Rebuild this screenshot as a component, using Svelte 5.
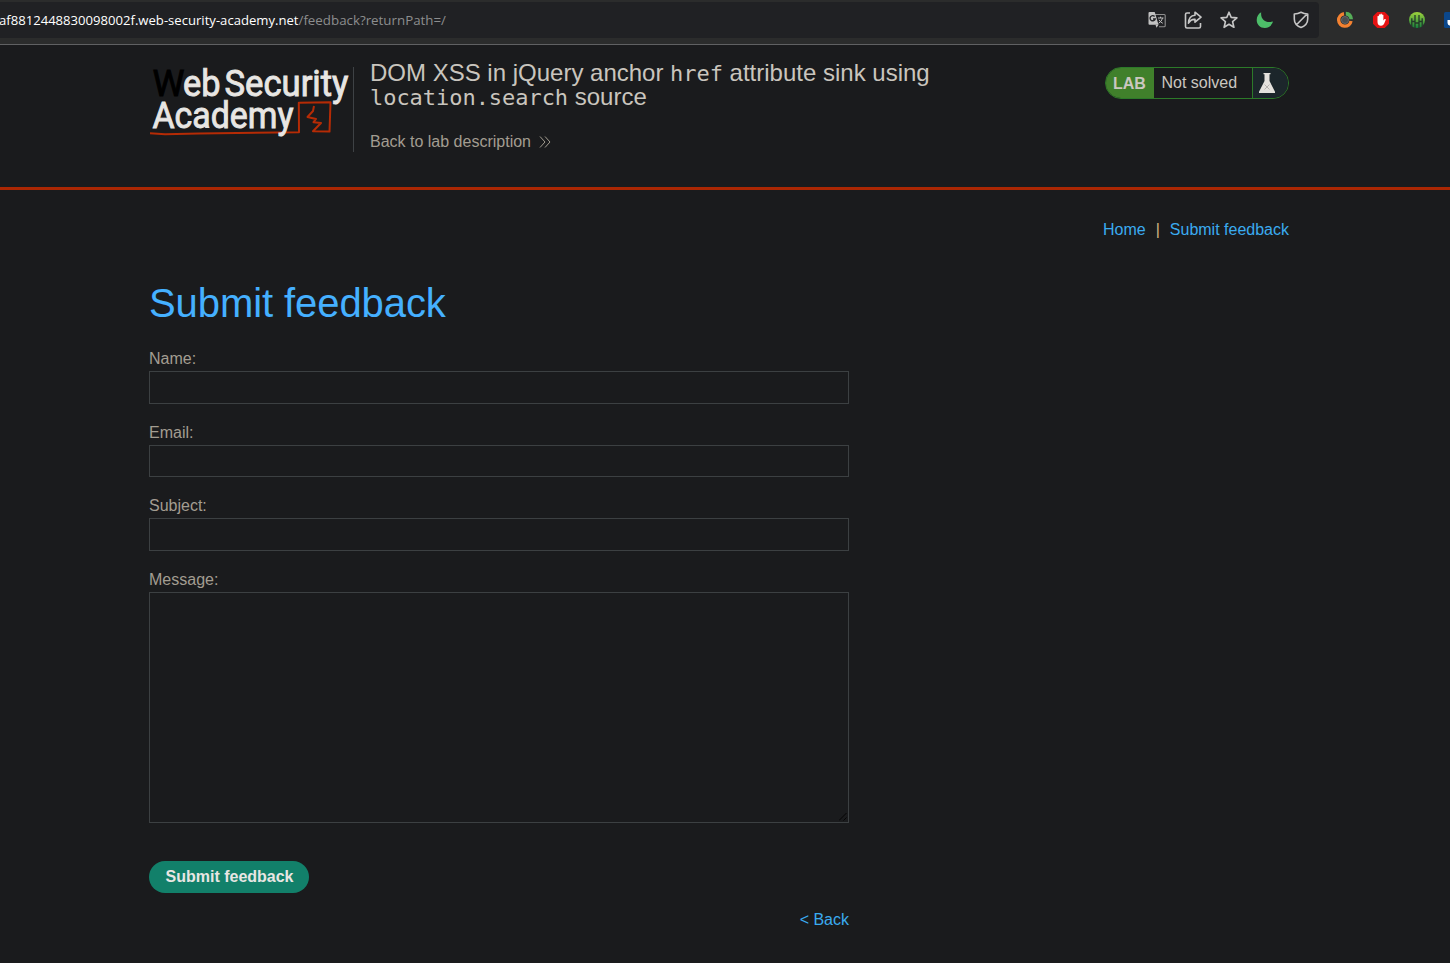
<script>
  const fields = [
    { id: 'name', label: 'Name:', height: 33, gap: 17 },
    { id: 'email', label: 'Email:', height: 32, gap: 17 },
    { id: 'subject', label: 'Subject:', height: 33, gap: 17 }
  ];
</script>

<div class="toolbar">
  <div class="address">
    <svg class="url" width="460" height="36">
      <text x="-1" y="23" class="host" textLength="299.5" lengthAdjust="spacingAndGlyphs">af8812448830098002f.web-security-academy.net</text>
      <text x="298.5" y="23" class="path" textLength="147.5" lengthAdjust="spacingAndGlyphs">/feedback?returnPath=/</text>
    </svg>
    <div class="actions">
      <svg width="18" height="18" viewBox="0 0 18 18">
        <path d="M7 3.5h9.2q1 0 1 1v10.2q0 1-1 1H11" fill="none" stroke="#8f8f8f" stroke-width="1.1" />
        <path d="M1.5 1h5.2l3.8 12.8H1.5q-1 0-1-1V2q0-1 1-1z" fill="#c2c2c2" />
        <path d="M10.5 13.8l-2 3-1-3z" fill="#c2c2c2" />
        <path d="M6.6 5.4A2.6 2.6 0 1 0 7.2 8H5" fill="none" stroke="#242528" stroke-width="1.4" />
        <path d="M10 7h5.5M12.5 5.7V7M14.6 7q-.8 3.5-4 5.3M11 8.8q1.4 2.4 3.8 3.5" fill="none" stroke="#bbb" stroke-width="1" />
      </svg>
      <svg width="18" height="18" viewBox="0 0 18 18" fill="none" stroke="#c6c6c6" stroke-width="1.6" stroke-linejoin="round">
        <path d="M6 2H3Q1.5 2 1.5 3.5v12Q1.5 17 3 17h12q1.5 0 1.5-1.5V12" />
        <path d="M11 1.2l6 5-6 5V8.4Q7 8 4.5 12.2 4.7 4.7 11 4.2z" />
      </svg>
      <svg width="18" height="18" viewBox="0 0 18 18" fill="none" stroke="#c6c6c6" stroke-width="1.6" stroke-linejoin="round">
        <path d="M9 1.2l2.2 5.2 5.7.5-4.3 3.8 1.3 5.6L9 13.3l-4.9 3 1.3-5.6L1.1 6.9l5.7-.5z" />
      </svg>
      <svg width="18" height="18" viewBox="0 0 18 18">
        <path d="M5.2 1.2C4.3 8 9.5 12.7 17 10.6 16 14.2 12.7 17 8.8 17 4.2 17 .7 13.5.7 9 .7 5.6 2.4 2.6 5.2 1.2z" fill="#4dbd69" />
      </svg>
      <svg width="18" height="18" viewBox="0 0 18 18" fill="none" stroke="#c6c6c6" stroke-width="1.6" stroke-linejoin="round">
        <path d="M9 1.3Q12 3 15.7 3V8q0 6-6.7 8.5Q2.3 14 2.3 8V3Q6 3 9 1.3zM4.5 13.8L14.8 3.3" />
      </svg>
    </div>
  </div>
  <div class="extensions">
    <svg width="18" height="18" viewBox="0 0 18 18">
      <path d="M8 2.8A6.2 6.2 0 1 0 15 10" fill="none" stroke="#f38231" stroke-width="3.4" />
      <path d="M9.8.8Q16.5 1.2 17 8.3h-3.6Q13 4.9 9.8 4.5z" fill="#55ad58" />
      <circle cx="9" cy="9" r="3.5" fill="#4a4d4f" stroke="#64686b" />
    </svg>
    <svg width="18" height="18" viewBox="0 0 18 18">
      <path d="M5.3 1h7.4L17 5.3v7.4L12.7 17H5.3L1 12.7V5.3z" fill="#e51212" />
      <path d="M5.5 9.5V5.2q.7-.9 1.4 0V3.7q.7-.9 1.5 0V3q.7-.8 1.5 0v1q.8-.8 1.5 0v5.4l1.2-1.3q1-.5 1.3.3L12 13Q11 14.9 9 14.8 5.500 14.400 5.500 11z" fill="#fff" />
    </svg>
    <svg width="18" height="18" viewBox="0 0 18 18">
      <defs>
        <linearGradient id="leaf" x2="0" y2="1"><stop stop-color="#9fd33c" /><stop offset="1" stop-color="#16803d" /></linearGradient>
      </defs>
      <circle cx="9" cy="9" r="8" fill="url(#leaf)" />
      <path d="M3.8 7.3v8M7 4v13M11 4v13M14.2 7.3v8M3.8 10.5H7M11 10.5h3.2M7 12h4" stroke="#24382a" stroke-width="1.3" fill="none" />
    </svg>
    <svg width="18" height="18" viewBox="0 0 18 18">
      <rect y="1" width="18" height="16" rx="1.5" fill="#0b478b" />
      <path d="M3.5 9h9v3q0 3-4.5 3t-4.5-3z" fill="#fff" />
    </svg>
  </div>
</div>

<header>
  <div class="container head">
    <svg class="logo" width="204" height="85" viewBox="149 67 204 85">
      <g class="brand">
        <text x="152.5" y="95.7" class="dark" textLength="32" lengthAdjust="spacingAndGlyphs">W</text>
        <text x="183" y="95.7" textLength="37.5" lengthAdjust="spacingAndGlyphs">eb</text>
        <text x="224.5" y="95.7" textLength="124" lengthAdjust="spacingAndGlyphs">Security</text>
      </g>
      <g fill="none" stroke="#b52b05" stroke-width="2" stroke-linejoin="round">
        <path d="M150 133.2L165 134.2 199 133.6L299 132.2 298.8 102.700 330.500 102.200 329.500 131.600 313 131.300 321 123 313.500 122.200 316 119 307.500 117 313 111 314 106" />
      </g>
      <g class="brand">
        <text x="152.5" y="128.3" textLength="141" lengthAdjust="spacingAndGlyphs">Academy</text>
      </g>
    </svg>
    <div class="title">
      <h2>DOM XSS in jQuery anchor <code>href</code> attribute sink using <code>location.search</code> source</h2>
      <a class="lab-link" href="#lab">Back to lab description
        <svg width="12" height="12" viewBox="0 0 12 12"><path d="M1 .5L6 6 1 11.5M6 .5L11 6 6 11.5" fill="none" stroke="#a39d91" /></svg>
      </a>
    </div>
    <div class="status">
      <b>LAB</b>
      <span>Not solved</span>
      <i>
        <svg width="16" height="20" viewBox="0 0 16 20">
          <path d="M4.5 0h7v1.2h-1V8L16 18.7v1.3H0v-1.3L5.5 8V1.2h-1z" fill="#e4e2dd" />
          <path d="M5.500 11.500l5 5M10.500 11.500l-5 5" stroke="#b5b3af" fill="none" />
        </svg>
      </i>
    </div>
  </div>
</header>

<main class="container">
  <nav><a href="#home">Home</a><span>|</span><a href="#feedback">Submit feedback</a></nav>
  <h1>Submit feedback</h1>
  <form>
    {#each fields as f}
      <label for={f.id}>{f.label}</label>
      <input id={f.id} style="height: {f.height}px; margin-bottom: {f.gap}px" />
    {/each}
    <label for="message">Message:</label>
    <div class="area">
      <textarea id="message"></textarea>
      <svg class="grip" width="8" height="8"><path d="M0 7.5L7.5 0M4.5 7.5L7.5 4.5" stroke="#050505" /></svg>
    </div>
    <button type="button">Submit feedback</button>
    <a class="back" href="#back">&lt; Back</a>
  </form>
</main>

<style>
  :global(body) {
    background: #1a1b1d;
    font-family: "Liberation Sans", Arial, sans-serif;
    font-size: 16px;
    overflow: hidden;
  }
  * { box-sizing: border-box; }
  svg { display: block; flex: none; }
  a { color: #3aabf0; text-decoration: none; }
  .toolbar {
    height: 45px;
    display: flex;
    padding-top: 2px;
    background: #2b2c2c;
    border-bottom: 1px solid #606163;
    overflow: hidden;
  }
  .address {
    width: 1319px;
    height: 36px;
    flex: none;
    display: flex;
    justify-content: space-between;
    align-items: center;
    background: #202124;
    border-radius: 0 4px 4px 0;
  }
  .url { font: 13px "Open Sans", "Noto Sans", sans-serif; }
  .host { fill: #fff; }
  .path { fill: #8c8d8e; }
  .actions { display: flex; gap: 18px; padding-right: 9px; }
  .extensions { display: flex; gap: 18px; padding: 9px 0 0 17px; }
  .container { width: 1140px; margin: 0 0 0 149px; }
  header { height: 145px; border-bottom: 3px solid #ab2703; padding-top: 22px; }
  .head { display: flex; align-items: flex-start; }
  .logo { overflow: visible; }
  .brand { font: 400 37px Roboto, sans-serif; fill: #e8e6e3; stroke: #e8e6e3; stroke-width: 0.9px; }
  .dark { fill: #000; stroke: #000; }
  .title { width: 600px; height: 85px; border-left: 1px solid #3e4245; padding-left: 16px; margin-right: auto; }
  h2 { margin: -6px 0 0; font-size: 24px; line-height: 24px; font-weight: 400; color: #c9c5be; }
  code { font: 22px/20px "DejaVu Sans Mono", monospace; letter-spacing: -0.04px; }
  .lab-link { display: flex; align-items: center; gap: 8px; line-height: 18px; margin-top: 24px; color: #a39d91; }
  .lab-link svg { margin-top: -1px; }
  .status {
    width: 184px;
    height: 32px;
    display: flex;
    border: 1px solid #2c7a29;
    border-radius: 16px;
    overflow: hidden;
    color: #cbc7c0;
    line-height: 30px;
  }
  .status b { width: 48px; padding-left: 7px; background: #40802b; line-height: 31px; }
  .status span { width: 98px; padding-left: 7.5px; }
  .status i { flex: 1; border-left: 1px solid #2c7a29; background: #1c262b; padding: 5px 0 0 6px; }
  nav { display: flex; justify-content: flex-end; gap: 10px; line-height: 18px; padding-top: 31px; color: #d0b384; }
  h1 { margin: 41px 0 0; font-size: 40px; line-height: 46px; font-weight: 400; color: #45b0ff; letter-spacing: -0.08px; }
  form { width: 700px; display: flex; flex-direction: column; margin-top: 21px; }
  label { height: 24px; line-height: 24px; color: #a39d91; }
  input, textarea {
    display: block;
    width: 100%;
    background: #1a1b1d;
    border: 1px solid #3c4042;
    border-radius: 0;
    padding: 4px;
    margin: 0;
    color: #ddd;
    outline: none;
  }
  textarea { height: 231px; resize: none; }
  .area { position: relative; }
  .grip { position: absolute; right: 2px; bottom: 2px; }
  button {
    width: 160px;
    height: 32px;
    margin-top: 38px;
    padding: 0 0 0 1px;
    border: 0;
    border-radius: 16px;
    background: #12806a;
    color: #e8e6e3;
    font: bold 16px "Liberation Sans", Arial, sans-serif;
  }
  .back { align-self: flex-end; line-height: 18px; margin-top: 18px; }
</style>
